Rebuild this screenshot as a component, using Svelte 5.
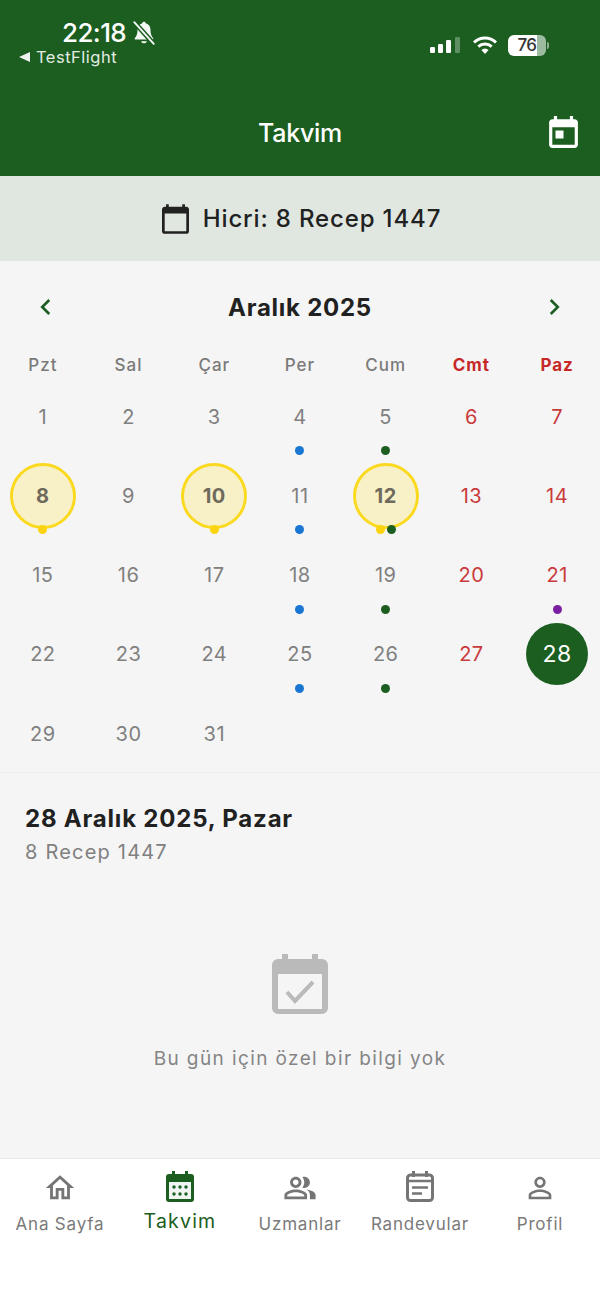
<script lang="ts">
  // Calendar screen. Month grid is built from data, Monday first.
  type Day = { n: number; dots?: string[]; marked?: boolean; selected?: boolean };

  const WEEKDAYS = ["Pzt", "Sal", "Çar", "Per", "Cum", "Cmt", "Paz"];
  const BLUE = "#1976d2";
  const GREEN = "#1b5e20";
  const PURPLE = "#7b1fa2";
  const YELLOW = "#fbd40f";

  const extras: Record<number, Partial<Day>> = {
    4: { dots: [BLUE] },
    5: { dots: [GREEN] },
    8: { marked: true, dots: [YELLOW] },
    10: { marked: true, dots: [YELLOW] },
    11: { dots: [BLUE] },
    12: { marked: true, dots: [YELLOW, GREEN] },
    18: { dots: [BLUE] },
    19: { dots: [GREEN] },
    21: { dots: [PURPLE] },
    25: { dots: [BLUE] },
    26: { dots: [GREEN] },
    28: { selected: true },
  };

  const days: Day[] = Array.from({ length: 31 }, (_, i) => ({ n: i + 1, ...extras[i + 1] }));

  const TABS = [
    {
      label: "Ana Sayfa",
      path: "M12 5.69l5 4.5V18h-2v-6H9v6H7v-7.81l5-4.5M12 3L2 12h3v8h6v-6h2v6h6v-8h3L12 3z",
    },
    { label: "Takvim", kind: "calendar" },
    {
      label: "Uzmanlar",
      path: "M16.67 13.13C18.04 14.06 19 15.32 19 17v3h4v-3c0-2.18-3.57-3.47-6.33-3.87zM15 12c2.21 0 4-1.79 4-4s-1.79-4-4-4c-.47 0-.91.1-1.33.24C14.5 5.27 15 6.58 15 8s-.5 2.73-1.33 3.76c.42.14.86.24 1.33.24zM9 12c2.21 0 4-1.79 4-4s-1.79-4-4-4-4 1.79-4 4 1.79 4 4 4zm0-6c1.1 0 2 .9 2 2s-.9 2-2 2-2-.9-2-2 .9-2 2-2zM9 13c-2.67 0-8 1.34-8 4v3h16v-3c0-2.66-5.33-4-8-4zm6 5H3v-.99C3.2 16.29 6.3 15 9 15s5.8 1.29 6 2v1z",
    },
    { label: "Randevular", kind: "note" },
    {
      label: "Profil",
      path: "M12 5.9c1.16 0 2.1.94 2.1 2.1s-.94 2.1-2.1 2.1S9.9 9.16 9.9 8s.94-2.1 2.1-2.1m0 9c2.97 0 6.1 1.46 6.1 2.1v1.1H5.9V17c0-.64 3.13-2.1 6.1-2.1M12 4C9.79 4 8 5.79 8 8s1.79 4 4 4 4-1.79 4-4-1.79-4-4-4zm0 9c-2.67 0-8 1.34-8 4v3h16v-3c0-2.66-5.33-4-8-4z",
    },
  ];
</script>

<div class="screen">
  <header class="header">
    <div class="status">
      <div class="status-left">
        <div class="time-row">
          <span class="time">22:18</span>
          <svg class="bell" viewBox="0 0 24 24" width="26" height="26">
            <path fill="currentColor" d="M12 1.500c-.9 0-1.500.6-1.600 1.400C7.600 3.600 6 6 6 9c0 3.600-.7 5.800-2.400 7.500-.5.6-.2 1.500.7 1.500h15.400c.9 0 1.200-.9.700-1.500C18.700 14.800 18 12.600 18 9c0-3-1.600-5.400-4.400-6.100C13.500 2.100 12.900 1.500 12 1.500zM9.300 19.500a2.800 2.800 0 0 0 5.400 0z" />
            <path stroke="#1b5e20" stroke-width="4.500" d="M3 2l18 20" />
            <path stroke="currentColor" stroke-width="1.800" stroke-linecap="round" d="M3 2l18 20" />
          </svg>
        </div>
        <div class="back-row">
          <span class="back-arrow"></span>
          <span>TestFlight</span>
        </div>
      </div>
      <div class="status-right">
        <svg class="signal" viewBox="0 0 30 16" width="30" height="16">
          <rect x="0" y="10" width="5" height="6" rx="1.200" fill="#fff" />
          <rect x="8" y="7" width="5" height="9" rx="1.200" fill="#fff" />
          <rect x="16" y="3" width="5" height="13" rx="1.200" fill="#fff" />
          <rect x="25" y="0" width="5" height="16" rx="1.200" fill="#fff" opacity=".3" />
        </svg>
        <svg class="wifi" viewBox="0 0 26 18" width="26" height="18">
          <g fill="none" stroke="#fff" stroke-width="3">
            <path d="M2 6.500a16 16 0 0 1 22 0" />
            <path d="M6.300 10.700a10 10 0 0 1 13.400 0" />
          </g>
          <path fill="#fff" d="M13 18l-3.600-3.900a5 5 0 0 1 7.200 0z" />
        </svg>
        <div class="battery"><span>76</span></div>
        <span class="battery-cap"></span>
      </div>
    </div>
    <div class="title-row">
      <h1>Takvim</h1>
      <svg class="header-icon" viewBox="3 1 18 20" width="29" height="32">
        <path fill="#fff" d="M19 3h-1V1h-2v2H8V1H6v2H5c-1.110 0-1.990.9-1.990 2L3 19c0 1.100.89 2 2 2h14c1.100 0 2-.9 2-2V5c0-1.100-.9-2-2-2zm0 16H5V8h14v11zM7 10h5v5H7z" />
      </svg>
    </div>
  </header>

  <div class="hijri">
    <svg viewBox="2 1 20 22" width="27" height="30">
      <path fill="#212121" d="M20 3h-1V1h-2v2H7V1H5v2H4c-1.100 0-2 .9-2 2v16c0 1.100.9 2 2 2h16c1.100 0 2-.9 2-2V5c0-1.100-.9-2-2-2zm0 18H4V8h16v13z" />
    </svg>
    <span>Hicri: 8 Recep 1447</span>
  </div>

  <section class="calendar">
    <div class="month-row">
      <svg viewBox="0 0 24 24" width="26" height="26"><path fill="none" stroke="#1b5e20" stroke-width="2.400" d="M15 5.500L8.500 12l6.500 6.500" /></svg>
      <h2>Aralık 2025</h2>
      <svg viewBox="0 0 24 24" width="26" height="26"><path fill="none" stroke="#1b5e20" stroke-width="2.400" d="M9 5.500l6.500 6.500L9 18.500" /></svg>
    </div>

    <div class="weekdays">
      {#each WEEKDAYS as w, i (w)}
        <span class:weekend={i > 4}>{w}</span>
      {/each}
    </div>

    <div class="grid">
      {#each days as d (d.n)}
        <div class="cell" class:weekend={(d.n + 6) % 7 > 4}>
          <span class="num" class:marked={d.marked} class:selected={d.selected}>{d.n}</span>
          {#if d.dots}
            <div class="dots">
              {#each d.dots as c}
                <i style="background: {c}"></i>
              {/each}
            </div>
          {/if}
        </div>
      {/each}
    </div>
  </section>

  <section class="detail">
    <h3>28 Aralık 2025, Pazar</h3>
    <p class="detail-hijri">8 Recep 1447</p>
    <div class="empty">
      <svg viewBox="0 0 56 60" width="56" height="60">
        <path fill="#bababa" d="M6 5h4V0h6v5h24V0h6v5h4a6 6 0 0 1 6 6v43a6 6 0 0 1-6 6H6a6 6 0 0 1-6-6V11a6 6 0 0 1 6-6z" />
        <rect x="6" y="20" width="44" height="35" fill="#f5f5f5" />
        <path fill="none" stroke="#bababa" stroke-width="4" d="M15 38l8 9 18-19" />
      </svg>
      <p>Bu gün için özel bir bilgi yok</p>
    </div>
  </section>

  <nav class="tabs">
    {#each TABS as tab (tab.label)}
      <div class="tab" class:active={tab.kind === "calendar"}>
        {#if tab.kind === "calendar"}
          <svg viewBox="0 0 28 31" width="28" height="31">
            <path fill="#1b5e20" d="M3 3h3V0h3v3h10V0h3v3h3a3 3 0 0 1 3 3v22a3 3 0 0 1-3 3H3a3 3 0 0 1-3-3V6a3 3 0 0 1 3-3z" />
            <rect x="3" y="11" width="22" height="17" fill="#f1f5f1" />
            <g fill="#1b5e20">
              <circle cx="8" cy="16" r="1.700" /><circle cx="14" cy="16" r="1.700" /><circle cx="20" cy="16" r="1.700" />
              <circle cx="8" cy="23" r="1.700" /><circle cx="14" cy="23" r="1.700" /><circle cx="20" cy="23" r="1.700" />
            </g>
          </svg>
        {:else if tab.kind === "note"}
          <svg class="note-icon" viewBox="0 0 28 31" width="28" height="31">
            <g fill="none" stroke="#757575">
              <rect x="1.500" y="4" width="25" height="25.500" rx="3" stroke-width="3" />
              <path stroke-width="3" d="M7.500 0v6M20.500 0v6" />
              <path stroke-width="2.400" d="M2 10h24M6 16.500h16M6 22.500h10" />
            </g>
          </svg>
        {:else}
          <svg viewBox="0 0 24 24" width="34" height="34"><path fill="#757575" d={tab.path} /></svg>
        {/if}
        <span>{tab.label}</span>
      </div>
    {/each}
  </nav>
</div>

<style>
  :global(body) {
    margin: 0;
    background: #fff;
  }

  .screen {
    width: 600px;
    height: 1299px;
    display: flex;
    flex-direction: column;
    overflow: hidden;
    font-family: Inter, Roboto, "Liberation Sans", sans-serif;
    color: #212121;
    background: #fff;
  }

  h1, h2, h3, p {
    margin: 0;
  }

  /* header */
  .header {
    height: 176px;
    box-sizing: border-box;
    background: #1b5e20;
    color: #fff;
    display: flex;
    flex-direction: column;
  }

  .status {
    height: 96px;
    box-sizing: border-box;
    display: flex;
    justify-content: space-between;
    padding: 18px 51px 0 19px;
  }

  .status-left {
    display: flex;
    flex-direction: column;
  }

  .time-row {
    display: flex;
    align-items: center;
    gap: 5px;
    padding-left: 43px;
    height: 30px;
  }

  .time {
    font-size: 26px;
    font-weight: 500;
    line-height: 30px;
    letter-spacing: -0.6px;
  }

  .bell {
    color: #f4f7f4;
  }

  .back-row {
    display: flex;
    align-items: center;
    gap: 6px;
    font-size: 16.500px;
    line-height: 20px;
    letter-spacing: 0.5px;
    color: #e4ece4;
    margin-top: -1px;
  }

  .back-arrow {
    width: 0;
    height: 0;
    border-style: solid;
    border-width: 5.500px 11px 5.500px 0;
    border-color: transparent #f0f4f0 transparent transparent;
  }

  .status-right {
    display: flex;
    align-items: center;
    height: 20px;
    padding-top: 17px;
  }

  .signal {
    margin-right: 12px;
  }

  .wifi {
    margin-right: 10px;
  }

  .battery {
    width: 38px;
    height: 21px;
    border-radius: 6px;
    background: linear-gradient(90deg, #fff 76%, #9dbb9f 76%);
    color: #333;
    font-size: 17px;
    font-weight: 500;
    letter-spacing: -0.5px;
    line-height: 21px;
    text-align: center;
  }

  .battery-cap {
    width: 2px;
    height: 7px;
    margin-left: 1px;
    border-radius: 0 2px 2px 0;
    background: #8fb091;
  }

  .title-row {
    flex: 1;
    display: flex;
    align-items: center;
    justify-content: center;
    position: relative;
    padding-bottom: 6px;
  }

  h1 {
    font-size: 25px;
    font-weight: 500;
    letter-spacing: -0.3px;
  }

  .header-icon {
    position: absolute;
    right: 22px;
    top: 20px;
  }

  /* hijri banner */
  .hijri {
    height: 85px;
    box-sizing: border-box;
    padding-left: 3px;
    display: flex;
    align-items: center;
    justify-content: center;
    gap: 14px;
    background: #e0e7e1;
    font-size: 24px;
    font-weight: 500;
    letter-spacing: 0.85px;
  }

  /* month */
  .calendar {
    height: 512px;
    box-sizing: border-box;
    background: #f5f5f5;
    border-bottom: 1px solid #eeeeee;
  }

  .month-row {
    height: 92px;
    box-sizing: border-box;
    display: flex;
    align-items: center;
    justify-content: space-between;
    padding: 0 33px;
  }

  h2 {
    font-size: 24px;
    font-weight: 700;
    letter-spacing: 0.75px;
  }

  .weekdays,
  .grid {
    display: grid;
    grid-template-columns: repeat(7, 1fr);
  }

  .weekdays {
    height: 24px;
    align-items: center;
    justify-items: center;
    font-size: 17px;
    font-weight: 500;
    letter-spacing: 1px;
    color: #7a7a7a;
  }

  .weekdays .weekend {
    color: #c62828;
    font-weight: 700;
  }

  .grid {
    grid-auto-rows: 79.250px;
  }

  .cell {
    position: relative;
    display: flex;
    align-items: center;
    justify-content: center;
    font-size: 20px;
    letter-spacing: 0.5px;
    color: #808080;
  }

  .cell.weekend {
    color: #c93b3b;
  }

  .num {
    width: 62px;
    height: 62px;
    border-radius: 50%;
    display: flex;
    align-items: center;
    justify-content: center;
    flex: none;
  }

  .num.marked {
    width: 66px;
    height: 66px;
    box-sizing: border-box;
    border: 3px solid #fbd91f;
    background: #f8f1c8;
    color: #6f6a5c;
    font-weight: 700;
  }

  .num.selected {
    background: #1b5e20;
    color: #fff;
    font-size: 23px;
  }

  .dots {
    position: absolute;
    left: 0;
    right: 0;
    top: 69px;
    display: flex;
    justify-content: center;
    gap: 2px;
  }

  .dots i {
    width: 9px;
    height: 9px;
    border-radius: 50%;
  }

  /* selected day */
  .detail {
    flex: 1;
    box-sizing: border-box;
    padding: 31px 25px 0;
    background: #f5f5f5;
  }

  h3 {
    font-size: 24px;
    line-height: 30px;
    font-weight: 700;
    letter-spacing: 0.8px;
  }

  .detail-hijri {
    margin-top: 6px;
    font-size: 20px;
    line-height: 25px;
    letter-spacing: 1.2px;
    color: #808080;
  }

  .empty {
    margin-top: 89px;
    display: flex;
    flex-direction: column;
    align-items: center;
    gap: 33px;
    font-size: 19px;
    letter-spacing: 1.4px;
    color: #858585;
  }

  /* bottom tabs */
  .tabs {
    height: 141px;
    box-sizing: border-box;
    display: grid;
    grid-template-columns: repeat(5, 1fr);
    background: #fff;
    border-top: 1px solid #e8e8e8;
    padding-top: 12px;
  }

  .tab {
    display: flex;
    flex-direction: column;
    align-items: center;
    font-size: 17px;
    letter-spacing: 0.8px;
    color: #7a7a7a;
  }

  .tab span {
    margin-top: 8px;
    line-height: 22px;
  }

  .note-icon {
    margin-bottom: 3px;
  }

  .tab.active {
    color: #1b5e20;
    font-size: 19.500px;
    letter-spacing: 1.200px;
  }

  .tab.active span {
    margin-top: 6px;
    line-height: 26px;
  }
</style>
